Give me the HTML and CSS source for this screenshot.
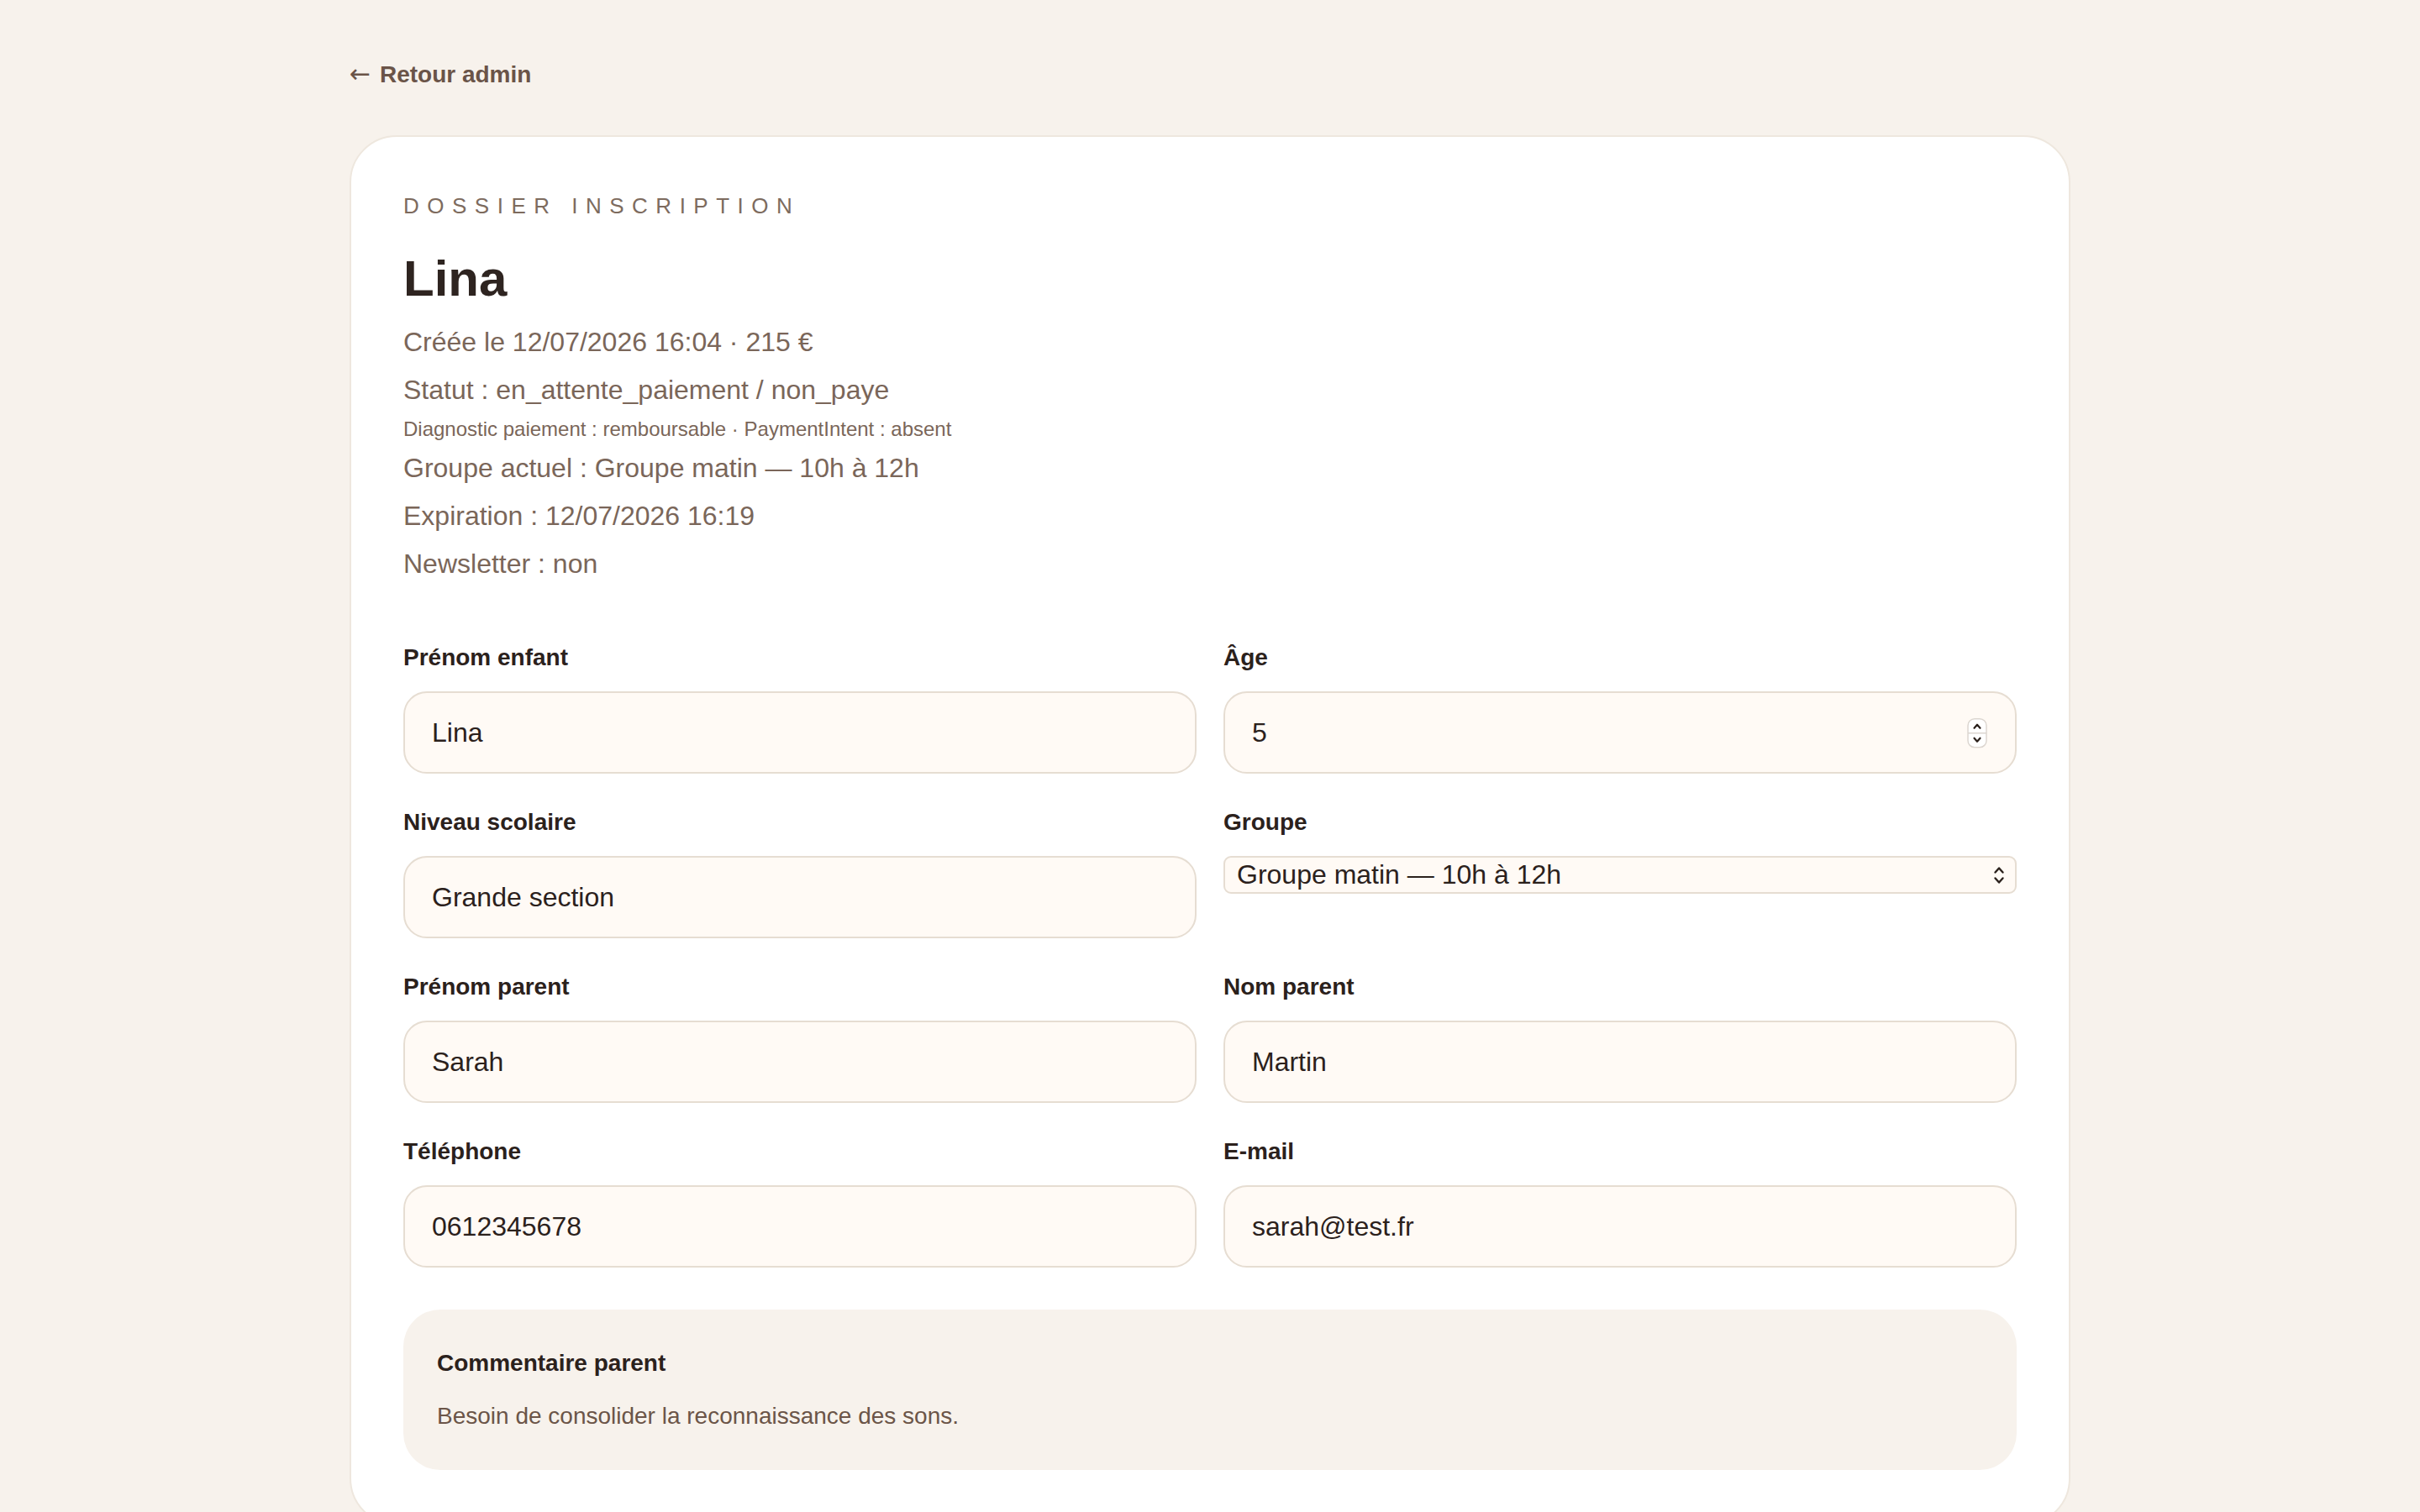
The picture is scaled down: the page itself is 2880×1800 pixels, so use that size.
FILE: index.html
```html
<!DOCTYPE html>
<html lang="fr">
<head>
    <meta charset="UTF-8">
    <meta name="viewport" content="width=device-width, initial-scale=1.0">
    <title>Dossier inscription - Lina</title>
    <link rel="stylesheet" href="styles.css">
</head>
<body>
    <div class="page">
        <a class="back-link" href="#"><span class="arrow">←</span> Retour admin</a>

        <div class="card">
            <p class="eyebrow">DOSSIER INSCRIPTION</p>
            <h1 class="child-name">Lina</h1>

            <div class="meta">
                <p>Créée le 12/07/2026 16:04 · 215 €</p>
                <p>Statut : en_attente_paiement / non_paye</p>
                <p class="meta-small">Diagnostic paiement : remboursable · PaymentIntent : absent</p>
                <p>Groupe actuel : Groupe matin — 10h à 12h</p>
                <p>Expiration : 12/07/2026 16:19</p>
                <p>Newsletter : non</p>
            </div>

            <form class="fields">
                <div class="field">
                    <label for="childName">Prénom enfant</label>
                    <input id="childName" type="text" value="Lina">
                </div>
                <div class="field">
                    <label for="age">Âge</label>
                    <div class="control-wrap">
                        <input id="age" type="number" value="5">
                        <svg class="spinner" width="24" height="36" viewBox="0 0 24 36">
                            <rect x="1" y="1" width="22" height="34" rx="8" fill="#fff" stroke="#dcd6d0" stroke-width="1.5"/>
                            <line x1="1" y1="18" x2="23" y2="18" stroke="#dcd6d0" stroke-width="1.5"/>
                            <path d="M8.5 12 L12 8 L15.5 12" fill="none" stroke="#2b211c" stroke-width="2.2" stroke-linecap="round" stroke-linejoin="round"/>
                            <path d="M8.5 24 L12 28 L15.5 24" fill="none" stroke="#2b211c" stroke-width="2.2" stroke-linecap="round" stroke-linejoin="round"/>
                        </svg>
                    </div>
                </div>

                <div class="field">
                    <label for="level">Niveau scolaire</label>
                    <input id="level" type="text" value="Grande section">
                </div>
                <div class="field">
                    <label for="group">Groupe</label>
                    <div class="control-wrap">
                        <select id="group">
                            <option>Groupe matin — 10h à 12h</option>
                            <option>Groupe après-midi — 14h à 16h</option>
                        </select>
                        <svg class="select-arrow" width="16" height="28" viewBox="0 0 16 28">
                            <path d="M3.5 10.5 L8 5.5 L12.5 10.5" fill="none" stroke="#2b211c" stroke-width="2.4" stroke-linecap="round" stroke-linejoin="round"/>
                            <path d="M3.5 17.5 L8 22.5 L12.5 17.5" fill="none" stroke="#2b211c" stroke-width="2.4" stroke-linecap="round" stroke-linejoin="round"/>
                        </svg>
                    </div>
                </div>

                <div class="field">
                    <label for="parentFirst">Prénom parent</label>
                    <input id="parentFirst" type="text" value="Sarah">
                </div>
                <div class="field">
                    <label for="parentLast">Nom parent</label>
                    <input id="parentLast" type="text" value="Martin">
                </div>

                <div class="field">
                    <label for="phone">Téléphone</label>
                    <input id="phone" type="tel" value="0612345678">
                </div>
                <div class="field">
                    <label for="email">E-mail</label>
                    <input id="email" type="email" value="sarah@test.fr">
                </div>
            </form>

            <div class="comment">
                <h2>Commentaire parent</h2>
                <p>Besoin de consolider la reconnaissance des sons.</p>
            </div>
        </div>
    </div>
</body>
</html>
```

FILE: styles.css
```css
body {
    margin: 0;
    padding: 0;
    background-color: #f7f2ec;
    font-family: "Liberation Sans", Arial, sans-serif;
    color: #2b211c;
}

.page {
    max-width: 2048px;
    margin: 0 auto;
    padding: 68px 0 120px;
}

.back-link {
    display: inline-block;
    margin-bottom: 52px;
    font-size: 28px;
    line-height: 40px;
    font-weight: bold;
    color: #6a5448;
    text-decoration: none;
}

.back-link .arrow {
    font-family: "DejaVu Sans", sans-serif;
    font-size: 30px;
    font-weight: normal;
    margin-right: 3px;
}

.card {
    background-color: #fff;
    border: 2px solid #eee7de;
    border-radius: 56px;
    padding: 64px 62px;
}

.eyebrow {
    margin: 0;
    font-size: 26px;
    line-height: 36px;
    letter-spacing: 9.5px;
    color: #7d6b5e;
}

.child-name {
    margin: 33px 0 0;
    font-size: 60px;
    line-height: 72px;
    font-weight: bold;
    color: #2e2420;
}

.meta {
    margin-top: 11px;
    color: #7a6659;
}

.meta p {
    margin: 0;
    font-size: 32px;
    line-height: 57px;
}

.meta .meta-small {
    font-size: 24px;
    line-height: 36px;
}

.fields {
    margin-top: 63px;
    display: grid;
    grid-template-columns: 1fr 1fr;
    column-gap: 32px;
    row-gap: 38px;
    align-items: start;
}

.field label {
    display: block;
    margin-bottom: 20px;
    font-size: 28px;
    line-height: 40px;
    font-weight: bold;
    color: #2b211c;
}

.field input {
    box-sizing: border-box;
    width: 100%;
    height: 98px;
    padding: 0 32px;
    font-family: inherit;
    font-size: 32px;
    color: #2b211c;
    background-color: #fffaf5;
    border: 2px solid #e6ddd2;
    border-radius: 28px;
    outline: none;
}

.field input[type=number] {
    -moz-appearance: textfield;
}

.field input[type=number]::-webkit-inner-spin-button,
.field input[type=number]::-webkit-outer-spin-button {
    -webkit-appearance: none;
    margin: 0;
}

.control-wrap {
    position: relative;
}

.spinner {
    position: absolute;
    right: 35px;
    top: 50%;
    transform: translateY(-48%);
    pointer-events: none;
}

.field select {
    -webkit-appearance: none;
    appearance: none;
    box-sizing: border-box;
    width: 100%;
    height: 45px;
    padding: 0 40px 0 14px;
    font-family: inherit;
    font-size: 32px;
    line-height: 41px;
    color: #2b211c;
    background-color: #fffaf5;
    border: 2px solid #e6ddd2;
    border-radius: 9px;
}

.select-arrow {
    position: absolute;
    right: 13px;
    top: 50%;
    transform: translateY(-50%);
    pointer-events: none;
}

.comment {
    margin-top: 50px;
    padding: 44px 40px;
    background-color: #f7f2ec;
    border-radius: 44px;
}

.comment h2 {
    margin: 0;
    font-size: 28px;
    line-height: 40px;
    font-weight: bold;
    color: #2b211c;
}

.comment p {
    margin: 23px 0 0;
    font-size: 28px;
    line-height: 40px;
    color: #6b5548;
}
```
